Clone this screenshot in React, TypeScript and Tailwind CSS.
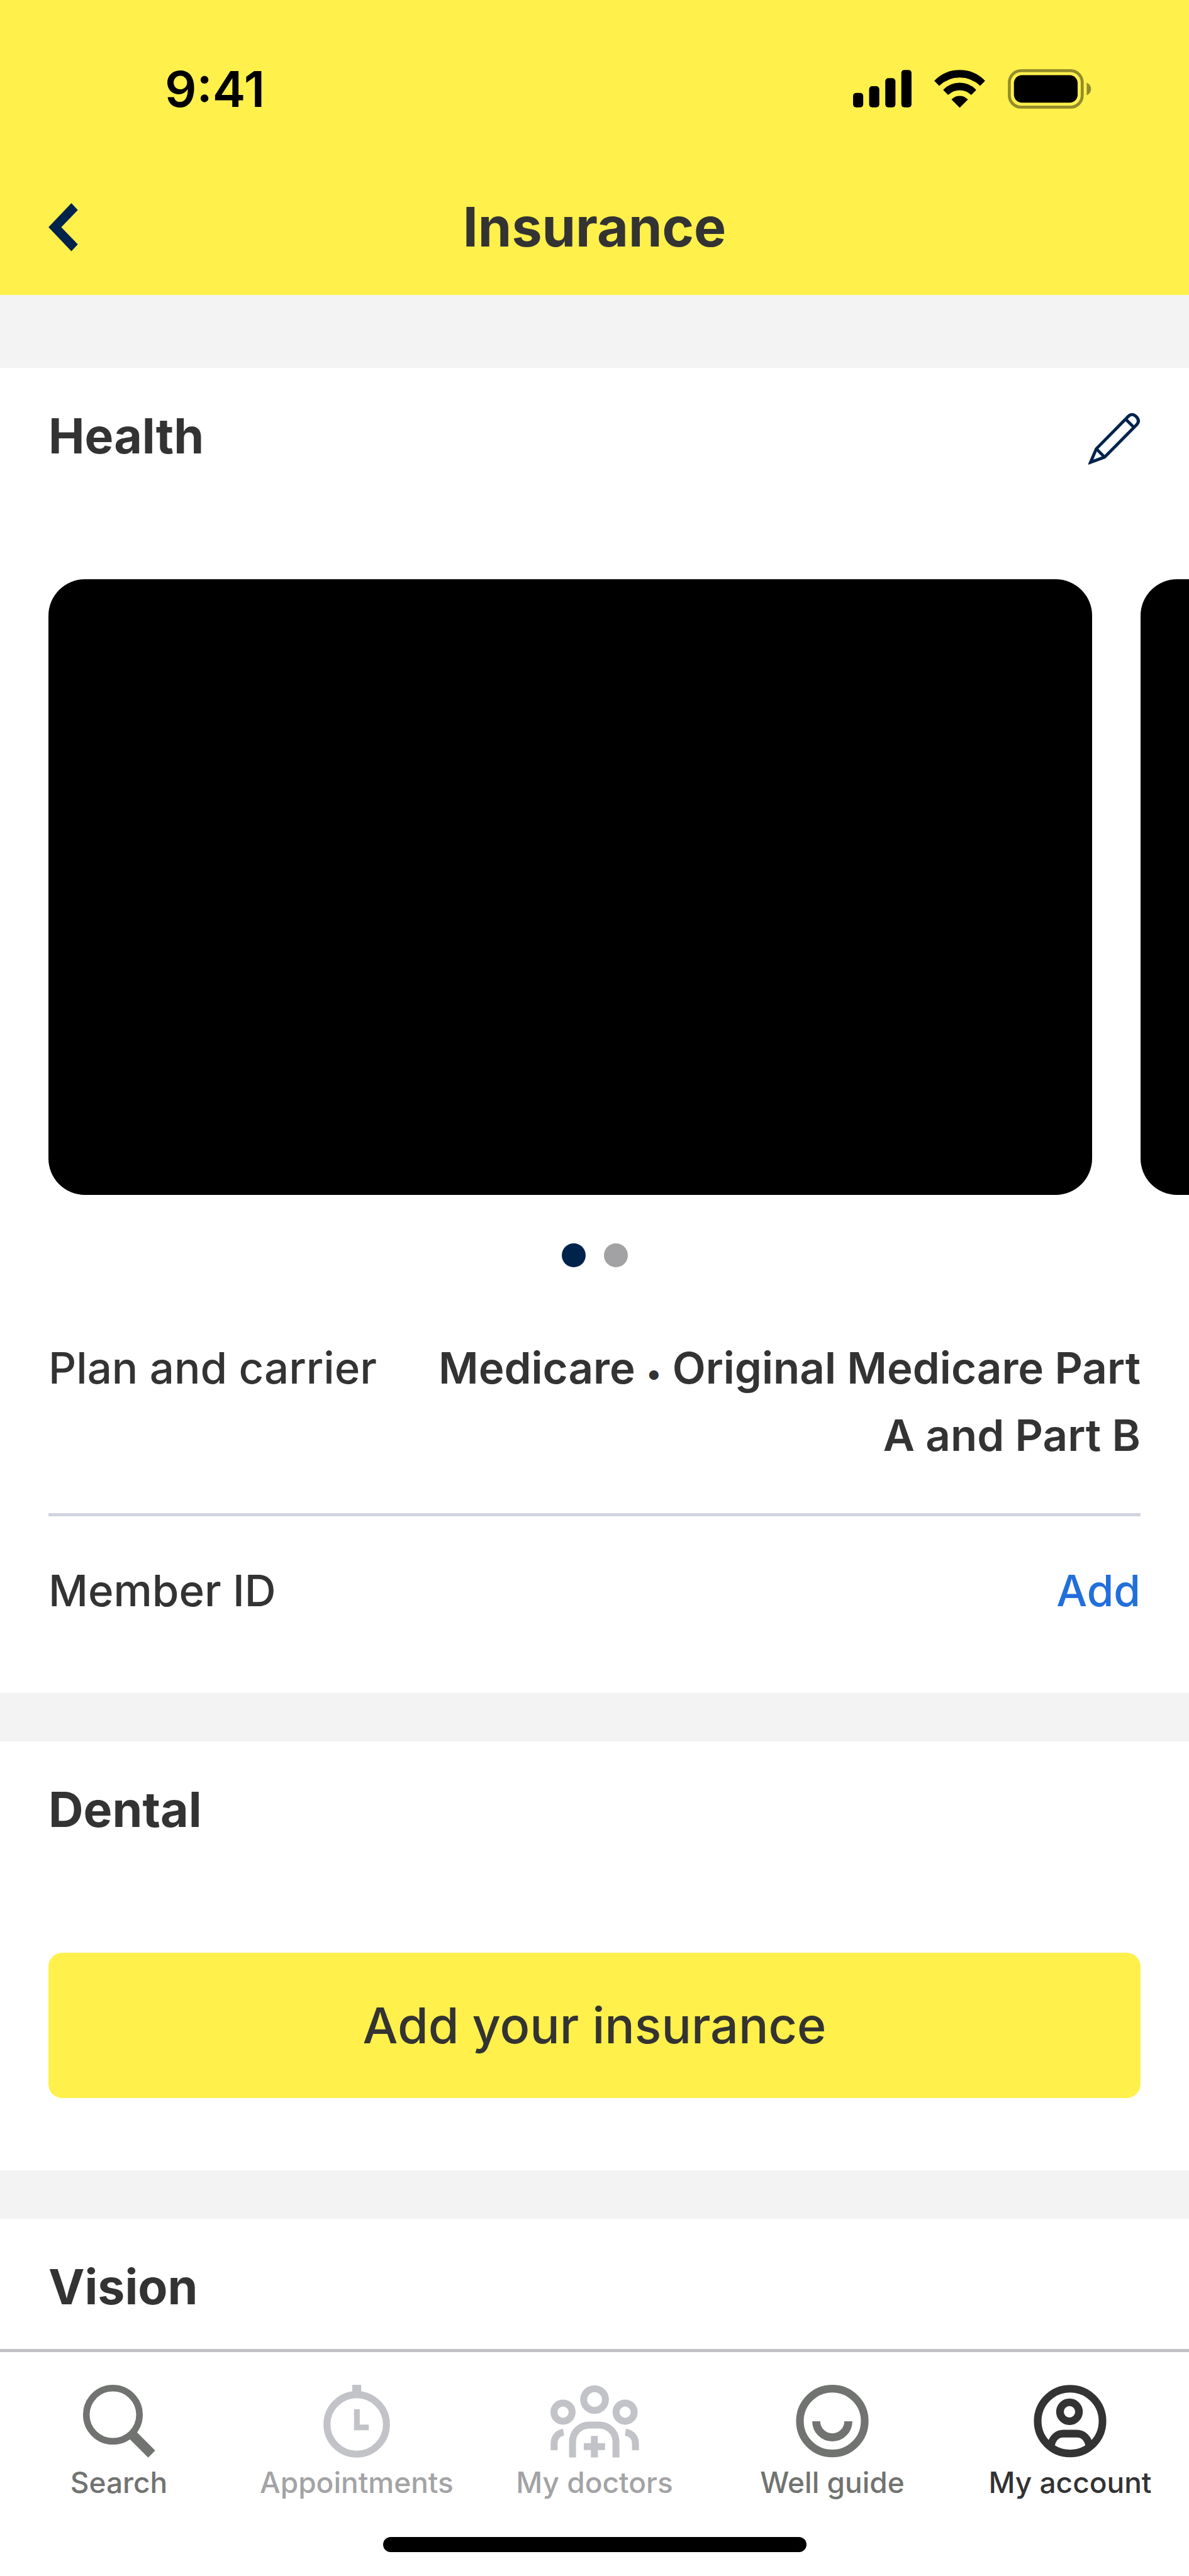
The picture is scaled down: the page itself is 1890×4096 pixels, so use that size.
import type { ReactNode } from "react";

function Chevron() {
  return (
    <svg viewBox="0 0 48 79" className="h-[77px] w-[47px]" fill="#00234b" aria-hidden="true">
      <path d="M0 39.2 37.3 0l10.5 11.3-27 27.9 27 27.9-10.5 11.3z" />
    </svg>
  );
}

function Signal() {
  return (
    <svg viewBox="0 0 95 61" className="h-[60px] w-[93px]" aria-hidden="true">
      <rect x="0" y="37.4" width="16.5" height="23.4" rx="5" />
      <rect x="26.1" y="26.4" width="16.5" height="34.4" rx="5" />
      <rect x="52.3" y="13.4" width="16.5" height="47.4" rx="5" />
      <rect x="78.4" y="0" width="16.5" height="60.8" rx="5" />
    </svg>
  );
}

function Wifi() {
  return (
    <svg viewBox="0 0 82 61" className="h-[60px] w-[81px]" aria-hidden="true">
      <g stroke="#000" strokeWidth="1.6" strokeLinejoin="round">
        <path d="M1 17.8A56 56 0 0 1 81 17.8L74 24.9A47.5 47.5 0 0 0 8 24.9Z" />
        <path d="M15.3 32.5A36 36 0 0 1 66.7 32.5L59.6 39.6A27 27 0 0 0 22.4 39.6Z" />
        <path d="M28.8 48.1A17 17 0 0 1 53.2 48.1L41 60.2Z" />
      </g>
    </svg>
  );
}

function Battery() {
  return (
    <svg viewBox="0 0 135 64" className="h-[63px] w-[133px]" aria-hidden="true">
      <rect x="2.4" y="2.4" width="117.7" height="59" rx="19" fill="none" stroke="#000" strokeOpacity="0.42" strokeWidth="4.8" />
      <rect x="9.8" y="9.7" width="102.9" height="44.4" rx="13" />
      <path d="M127.3 21.8v20.4c4.2-1.8 7-5.7 7-10.2s-2.8-8.4-7-10.2z" fillOpacity="0.42" />
    </svg>
  );
}

function Pencil() {
  return (
    <svg viewBox="0 0 85 85" className="size-[83px]" fill="none" stroke="#00234b" strokeWidth="5" aria-hidden="true">
      <path d="M13 59 64.5 6.6Q71-.2 78 6.6 84.9 13.8 78 20.5L26.4 72.6 3.6 81Z" />
      <path d="M13 59 26.4 72.6M60.5 10.6 74.3 24.2" />
    </svg>
  );
}

function SearchIcon() {
  return (
    <svg viewBox="0 0 118 118" className="size-[116px]" fill="none" stroke="currentColor" aria-hidden="true">
      <circle cx="49.3" cy="48.4" r="43" strokeWidth="10.7" />
      <path d="M80 80l32 32" strokeWidth="16" />
    </svg>
  );
}

function ClockIcon() {
  return (
    <svg viewBox="0 0 118 118" className="size-[116px]" fill="none" stroke="currentColor" aria-hidden="true">
      <circle cx="59" cy="64" r="48.1" strokeWidth="11.3" />
      <path d="M59 0v14" strokeWidth="14.5" />
      <path d="M59.3 39.4v29.6h19.2" strokeWidth="9.2" />
    </svg>
  );
}

function DoctorsIcon() {
  return (
    <svg viewBox="0 0 143 118" className="h-[116px] w-[141px]" fill="none" stroke="currentColor" strokeWidth="11.2" aria-hidden="true">
      <circle cx="71.1" cy="23.9" r="17.6" />
      <circle cx="20.1" cy="44.2" r="14.7" />
      <circle cx="120.5" cy="44.2" r="14.7" />
      <path d="M5.7 105.7V95C5.7 85 12 78 21 76.5M137.2 105.7V95C137.2 85 130.5 78 121 76.5" />
      <path d="M35.5 117.5V92A27 27 0 0 1 62.5 65H78.7A27 27 0 0 1 105.7 92V117.5" />
      <path d="M70.8 82.7V117.5M53.7 100H88" />
    </svg>
  );
}

function SmileIcon() {
  return (
    <svg viewBox="0 0 118 118" className="size-[116px]" fill="none" stroke="currentColor" aria-hidden="true">
      <circle cx="59" cy="58.7" r="52.4" strokeWidth="12.4" />
      <path d="M33 59a26 26 0 0 0 52 0" strokeWidth="13" />
    </svg>
  );
}

function AccountIcon() {
  return (
    <svg viewBox="0 0 118 118" className="size-[116px]" fill="none" stroke="currentColor" strokeWidth="12.3" aria-hidden="true">
      <circle cx="59" cy="58.7" r="52.4" />
      <circle cx="58" cy="43.6" r="15.4" />
      <path d="M28 98C30.5 86 38 79 48 79H70C80 79 87.5 86 90 98" />
    </svg>
  );
}

function SectionHeader({ title, children }: { title: string; children?: ReactNode }) {
  return (
    <div className="flex items-center justify-between px-[77px] pt-[50px] pb-[170px]">
      <h2 className="text-[77px] leading-[116px] font-bold">{title}</h2>
      {children}
    </div>
  );
}

const tabs = [
  { label: "Search", icon: <SearchIcon />, tone: "text-[#717371]", text: "text-[#717371]" },
  { label: "Appointments", icon: <ClockIcon />, tone: "text-[#c2c3c8]", text: "text-[#a3a3a5]" },
  { label: "My doctors", icon: <DoctorsIcon />, tone: "text-[#c2c3c8]", text: "text-[#a3a3a5]" },
  { label: "Well guide", icon: <SmileIcon />, tone: "text-[#717371]", text: "text-[#717371]" },
  { label: "My account", icon: <AccountIcon />, tone: "text-[#333333]", text: "text-[#333333]" },
];

export default function App() {
  return (
    <div className="flex min-h-screen flex-col bg-[#f3f3f3] font-['Inter',sans-serif] text-[#333333]">
      <header className="bg-[#fff04b] pb-[48px]">
        <div className="flex items-center justify-between pt-[91px] pr-[155px] pl-[262px] text-black">
          <span className="text-[79px] leading-[100px] font-semibold">9:41</span>
          <div className="flex items-center gap-[36px]">
            <Signal />
            <Wifi />
            <Battery />
          </div>
        </div>
        <div className="grid grid-cols-[1fr_auto_1fr] items-center px-[77px] pt-[110px]">
          <button type="button" aria-label="Back" className="justify-self-start">
            <Chevron />
          </button>
          <h1 className="text-[86px] leading-[120px] font-bold">Insurance</h1>
        </div>
      </header>

      <main className="flex grow flex-col gap-[77px] pt-[116px]">
        <section className="bg-white pb-[109px]">
          <SectionHeader title="Health">
            <button type="button" aria-label="Edit health insurance" className="pt-2">
              <Pencil />
            </button>
          </SectionHeader>
          <ul className="flex gap-[77px] overflow-hidden pl-[77px]" aria-label="Insurance card photos">
            <li className="aspect-[1659/979] w-[calc(100%-154px)] shrink-0 rounded-[58px] bg-black" />
            <li className="aspect-[1659/979] w-[calc(100%-154px)] shrink-0 rounded-[58px] bg-black" />
          </ul>
          <div className="flex justify-center gap-[29px] pt-[77px] pb-[107px]">
            <button type="button" aria-label="Card 1" className="size-[38px] rounded-full bg-[#00234b]" />
            <button type="button" aria-label="Card 2" className="size-[38px] rounded-full bg-[#a2a2a4]" />
          </div>
          <dl className="px-[77px] text-[69px] leading-[107px]">
            <div className="flex justify-between gap-[77px] border-b-[5px] border-[#cfd4de] pb-[70px]">
              <dt className="shrink-0 font-medium">Plan and carrier</dt>
              <dd className="text-right font-semibold">
                Medicare <span className="text-[48px] leading-none">•</span> Original Medicare Part A and Part B
              </dd>
            </div>
            <div className="flex justify-between pt-[65px] font-medium">
              <dt>Member ID</dt>
              <dd>
                <a href="#member-id" className="text-[#226fdb]">Add</a>
              </dd>
            </div>
          </dl>
        </section>

        <section className="bg-white pb-[115px]">
          <SectionHeader title="Dental" />
          <div className="px-[77px]">
            <button type="button" className="h-[231px] w-full rounded-[22px] bg-[#fff04b] text-[79px] font-medium">
              Add your insurance
            </button>
          </div>
        </section>

        <section className="grow bg-white">
          <div className="px-[77px] pt-[50px]">
            <h2 className="text-[77px] leading-[116px] font-bold">Vision</h2>
          </div>
        </section>
      </main>

      <nav className="sticky bottom-0 border-t-[5px] border-[#c0c1c6] bg-white pt-[52px] pb-[38px]">
        <ul className="grid grid-cols-5">
          {tabs.map((tab) => (
            <li key={tab.label}>
              <a href="#tab" className="flex flex-col items-center gap-[9px]">
                <span className={tab.tone}>{tab.icon}</span>
                <span className={`text-[46px] leading-[60px] font-medium whitespace-nowrap ${tab.text}`}>{tab.label}</span>
              </a>
            </li>
          ))}
        </ul>
        <div className="mx-auto mt-[57px] h-[24px] w-[673px] rounded-full bg-black" />
      </nav>
    </div>
  );
}
